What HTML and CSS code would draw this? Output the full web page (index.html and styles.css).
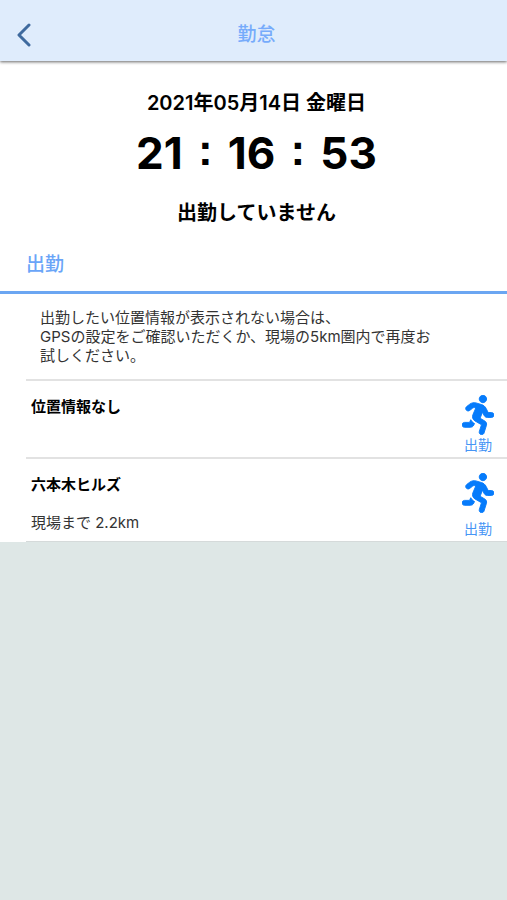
FILE: index.html
```html
<!DOCTYPE html>
<html lang="ja">

<head>
    <meta charset="UTF-8">
    <meta name="viewport" content="width=device-width, initial-scale=1.0">
    <title>勤怠</title>
    <link rel="stylesheet" href="styles.css">
</head>

<body>
    <svg class="sprite" aria-hidden="true">
        <symbol id="running" viewBox="0 0 416 512">
            <path d="M272 96c26.51 0 48-21.49 48-48S298.51 0 272 0s-48 21.49-48 48 21.49 48 48 48zM113.69 317.47l-14.8 34.52H32c-17.67 0-32 14.33-32 32s14.33 32 32 32h77.45c19.25 0 36.58-11.44 44.11-29.09l8.79-20.52-10.67-6.3c-17.32-10.23-30.06-25.37-37.99-42.61zM384 223.99h-44.03l-26.06-53.25c-12.5-25.55-35.45-44.23-61.78-50.94l-71.08-21.14c-28.3-6.8-57.77-.55-80.84 17.14l-39.67 30.41c-14.03 10.75-16.69 30.83-5.94 44.86s30.84 16.69 44.86 5.94l39.66-30.41c7.67-5.89 17.44-8 25.27-6.14l14.7 4.37-37.46 87.39c-12.62 29.48-1.31 64.01 26.3 80.31l84.98 50.17-27.47 87.73c-5.28 16.86 4.11 34.82 20.97 40.09 3.19 1 6.41 1.48 9.58 1.48 13.61 0 26.23-8.77 30.52-22.45l31.64-101.06c5.91-20.77-2.89-43.08-21.64-54.39l-61.24-36.14 31.31-78.28 20.27 41.43c8 16.34 24.92 26.89 43.11 26.89H384c17.67 0 32-14.33 32-32s-14.33-31.99-32-31.99z"/>
        </symbol>
    </svg>
    <header class="header">
        <button class="btn-back" type="button" aria-label="戻る">
            <svg viewBox="0 0 14 24" width="14" height="24">
                <path d="M12 2L2 12l10 10" fill="none" stroke="currentColor" stroke-width="3" stroke-linecap="round" stroke-linejoin="round"/>
            </svg>
        </button>
        <h1 class="titulo">勤怠</h1>
    </header>
    <main class="main">
        <section class="reloj">
            <p class="fecha">2021年05月14日 金曜日</p>
            <p class="hora">21<span class="sep">:</span>16<span class="sep">:</span>53</p>
            <p class="estado">出勤していません</p>
        </section>
        <h2 class="seccion">出勤</h2>
        <p class="aviso">出勤したい位置情報が表示されない場合は、<br>GPSの設定をご確認いただくか、現場の5km圏内で再度お<br>試しください。</p>
        <ul class="lista">
            <li class="item">
                <div class="lugar">
                    <h3 class="nombre">位置情報なし</h3>
                </div>
                <button class="btn-entrada" type="button">
                    <svg class="icono"><use href="#running"/></svg>
                    出勤
                </button>
            </li>
            <li class="item">
                <div class="lugar">
                    <h3 class="nombre">六本木ヒルズ</h3>
                    <p class="distancia">現場まで 2.2km</p>
                </div>
                <button class="btn-entrada" type="button">
                    <svg class="icono"><use href="#running"/></svg>
                    出勤
                </button>
            </li>
        </ul>
    </main>
</body>

</html>
```

FILE: styles.css
```css
* {
    margin: 0;
    padding: 0;
    box-sizing: border-box;
}

body {
    background-color: #dee7e6;
    color: #000;
    font-family: Inter, "Noto Sans CJK JP", sans-serif;
}

button {
    border: 0;
    background-color: transparent;
    font-family: inherit;
    cursor: pointer;
}

.sprite {
    display: none;
}

.header {
    position: relative;
    display: grid;
    grid-template-columns: 48px 1fr 42px;
    align-items: center;
    height: 61px;
    padding-top: 8px;
    background-color: #dfecfc;
    box-shadow: 0 1px 3px rgba(0, 0, 0, 0.6);
}

.btn-back {
    display: flex;
    justify-content: center;
    color: #3f6a9e;
}

.titulo {
    color: #76abfb;
    font-size: 19px;
    line-height: 28px;
    font-weight: 500;
    text-align: center;
}

.main {
    background-color: #fff;
}

.reloj {
    padding: 28px 0 0 6px;
    text-align: center;
}

.fecha,
.estado {
    font-size: 20px;
    line-height: 28px;
    font-weight: 600;
}

.hora {
    padding: 8px 0 18px;
    font-size: 44px;
    line-height: 56px;
    font-weight: 700;
}

.sep {
    display: inline-block;
    width: 45px;
    font-family: "Liberation Sans", sans-serif;
    vertical-align: 4px;
    line-height: 1;
}

.seccion {
    padding: 24px 26px 12px;
    border-bottom: 3px solid #6ba6f2;
    color: #6aa5f8;
    font-size: 19px;
    line-height: 28px;
    font-weight: 500;
}

.aviso {
    padding: 14px 40px;
    color: #333;
    font-size: 15px;
    line-height: 19px;
}

.lista {
    margin-left: 26px;
    list-style: none;
}

.item {
    display: flex;
    justify-content: space-between;
    border-top: 2px solid #e2e2e2;
}

.item:last-child {
    border-bottom: 1px solid #d5dada;
}

.lugar {
    padding: 16px 5px 8px;
}

.nombre {
    font-size: 15px;
    line-height: 20px;
    font-weight: 700;
}

.distancia {
    margin-top: 18px;
    color: #333;
    font-size: 15px;
    line-height: 20px;
}

.btn-entrada {
    display: flex;
    flex-direction: column;
    align-items: center;
    justify-content: space-between;
    padding: 14px 13px 2px;
    color: #4795f5;
    font-size: 14px;
    line-height: 20px;
}

.icono {
    width: 32px;
    height: 40px;
    fill: #067bfb;
    stroke: #067bfb;
    stroke-width: 12px;
    overflow: visible;
}
```
